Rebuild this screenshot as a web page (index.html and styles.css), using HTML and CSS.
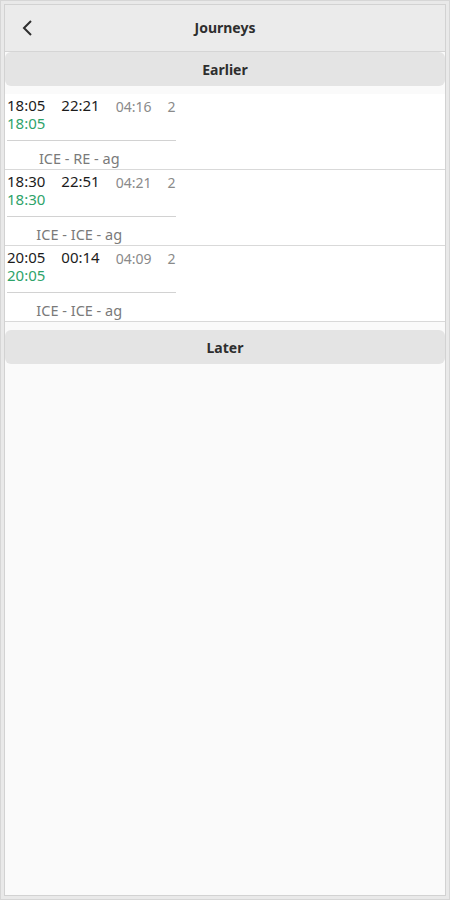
FILE: index.html
```html
<!DOCTYPE html>
<html>
<head>
<meta charset="utf-8">
<link rel="stylesheet" href="styles.css">
</head>
<body>
<div class="frame">
  <div class="window">
    <header class="header">
      <button class="back" aria-label="Back">
        <svg width="16" height="16" viewBox="0 0 16 16"><polyline points="11,1 4,8 11,15" fill="none" stroke="#2e2e2e" stroke-width="2" stroke-linecap="butt" stroke-linejoin="miter"/></svg>
      </button>
      <div class="title">Journeys</div>
    </header>
    <div class="content">
      <div class="btn btn-earlier">Earlier</div>
      <div class="list">
        <div class="row">
          <div class="journey">
            <span class="t">18:05</span><span class="t">22:21</span><span class="dur">04:16</span><span class="dur">2</span>
            <span class="rt">18:05</span>
            <div class="sep"></div>
            <div class="label">ICE - RE - ag</div>
          </div>
        </div>
        <div class="row">
          <div class="journey">
            <span class="t">18:30</span><span class="t">22:51</span><span class="dur">04:21</span><span class="dur">2</span>
            <span class="rt">18:30</span>
            <div class="sep"></div>
            <div class="label">ICE - ICE - ag</div>
          </div>
        </div>
        <div class="row">
          <div class="journey">
            <span class="t">20:05</span><span class="t">00:14</span><span class="dur">04:09</span><span class="dur">2</span>
            <span class="rt">20:05</span>
            <div class="sep"></div>
            <div class="label">ICE - ICE - ag</div>
          </div>
        </div>
      </div>
      <div class="btn btn-later">Later</div>
    </div>
  </div>
</div>
</body>
</html>
```

FILE: styles.css
```css
html, body {
  margin: 0;
  padding: 0;
}
body {
  width: 450px;
  height: 900px;
  font-family: "Noto Sans", "DejaVu Sans", sans-serif;
  color: #2e3436;
}
.frame {
  box-sizing: border-box;
  width: 450px;
  height: 900px;
  border: 1px solid #d6d6d6;
  background: #e9e9e9;
  padding: 3px;
}
.window {
  box-sizing: border-box;
  height: 100%;
  border: 1px solid #d2d2d2;
  background: #fafafa;
  display: flex;
  flex-direction: column;
}
.header {
  height: 46px;
  border-bottom: 1px solid #d5d5d5;
  background: #ebebeb;
  display: flex;
  align-items: center;
  justify-content: center;
  position: relative;
}
.back {
  position: absolute;
  left: 12px;
  top: 12px;
  width: 22px;
  height: 22px;
  padding: 0;
  border: 0;
  background: transparent;
  display: flex;
  align-items: center;
  justify-content: center;
}
.title {
  font-weight: 700;
  font-size: 14px;
  color: #2e2e2e;
  line-height: 18px;
}
.content {
  flex: 1;
  display: flex;
  flex-direction: column;
}
.btn {
  height: 34px;
  border-radius: 6px;
  background: #e4e4e4;
  display: flex;
  align-items: center;
  justify-content: center;
  font-weight: 700;
  font-size: 14px;
  color: #2e2e2e;
}
.btn-earlier {
  margin-top: 0;
}
.list {
  margin-top: 8px;
  background: #fff;
}
.row {
  height: 75px;
  border-bottom: 1px solid #d9d9d9;
  box-sizing: content-box;
  padding-left: 2px;
}
.journey {
  display: inline-grid;
  grid-template-columns: auto auto auto auto;
  column-gap: 16px;
  padding-top: 2px;
  font-size: 15px;
  line-height: 18px;
}
.t {
  color: #1c1c1c;
}
.dur {
  color: #8a8a8a;
  font-size: 14px;
  margin-top: 2px;
  margin-bottom: -2px;
}
.rt {
  grid-column: 1;
  color: #2ea36a;
}
.sep {
  grid-column: 1 / -1;
  height: 1px;
  background: #d2d2d2;
  margin-top: 8px;
}
.label {
  grid-column: 1 / 4;
  text-align: center;
  margin-top: 8px;
  font-size: 14.5px;
  color: #7a7a7a;
}
.btn-later {
  margin-top: 8px;
}
```
